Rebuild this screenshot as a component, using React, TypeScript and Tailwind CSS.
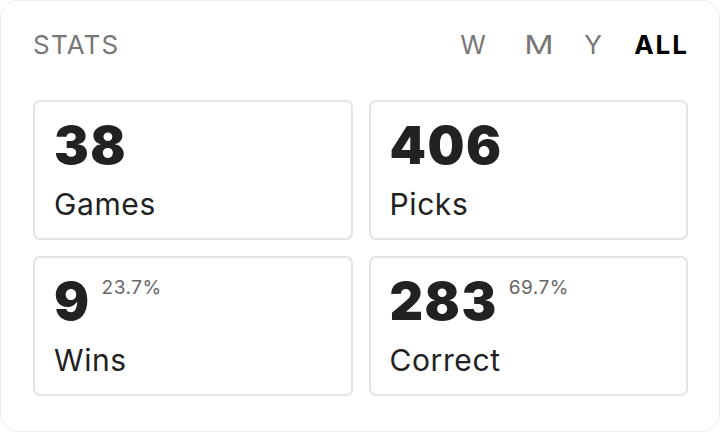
import React from "react";

const stats = [
  { value: "38", label: "Games", pct: "" },
  { value: "406", label: "Picks", pct: "" },
  { value: "9", label: "Wins", pct: "23.7%" },
  { value: "283", label: "Correct", pct: "69.7%" },
];

export default function App() {
  return (
    <div
      className="w-[720px] h-[432px] bg-white rounded-[18px] border border-[#ececec] px-[31px] pt-[31px] overflow-hidden"
      style={{ fontFamily: "Inter, 'Noto Sans', sans-serif" }}
    >
      <div className="flex items-start justify-between h-[26px]">
        <div className="ml-[1px] text-[26px] leading-none text-[#777] tracking-[1.2px]">STATS</div>
        <div className="flex text-[26px] leading-none text-[#777]">
          <span className="inline-block w-[28px] text-center">W</span>
          <span className="inline-block w-[30px] ml-[37px] text-center scale-x-[1.25]">M</span>
          <span className="inline-block w-[22px] ml-[28px] text-center">Y</span>
          <span className="inline-block ml-[30px] font-bold text-black tracking-[2px] mr-[-1px]">ALL</span>
        </div>
      </div>
      <div className="grid grid-cols-2 gap-[16px] mt-[42px] ml-[1px]">
        {stats.map((s) => (
          <div
            key={s.label}
            className="h-[140px] rounded-[7px] border-2 border-[#e4e4e4] pl-[19px] pt-[18px]"
          >
            <div className="flex items-start">
              <span className="text-[52px] leading-none font-black text-[#222] tracking-[1.5px]">{s.value}</span>
              {s.pct && (
                <span className="ml-[11px] mt-[2px] text-[19px] leading-none text-[#666] tracking-[0.5px]">{s.pct}</span>
              )}
            </div>
            <div className="mt-[14px] text-[30px] leading-[36px] text-[#222] tracking-[0.6px]">{s.label}</div>
          </div>
        ))}
      </div>
    </div>
  );
}
